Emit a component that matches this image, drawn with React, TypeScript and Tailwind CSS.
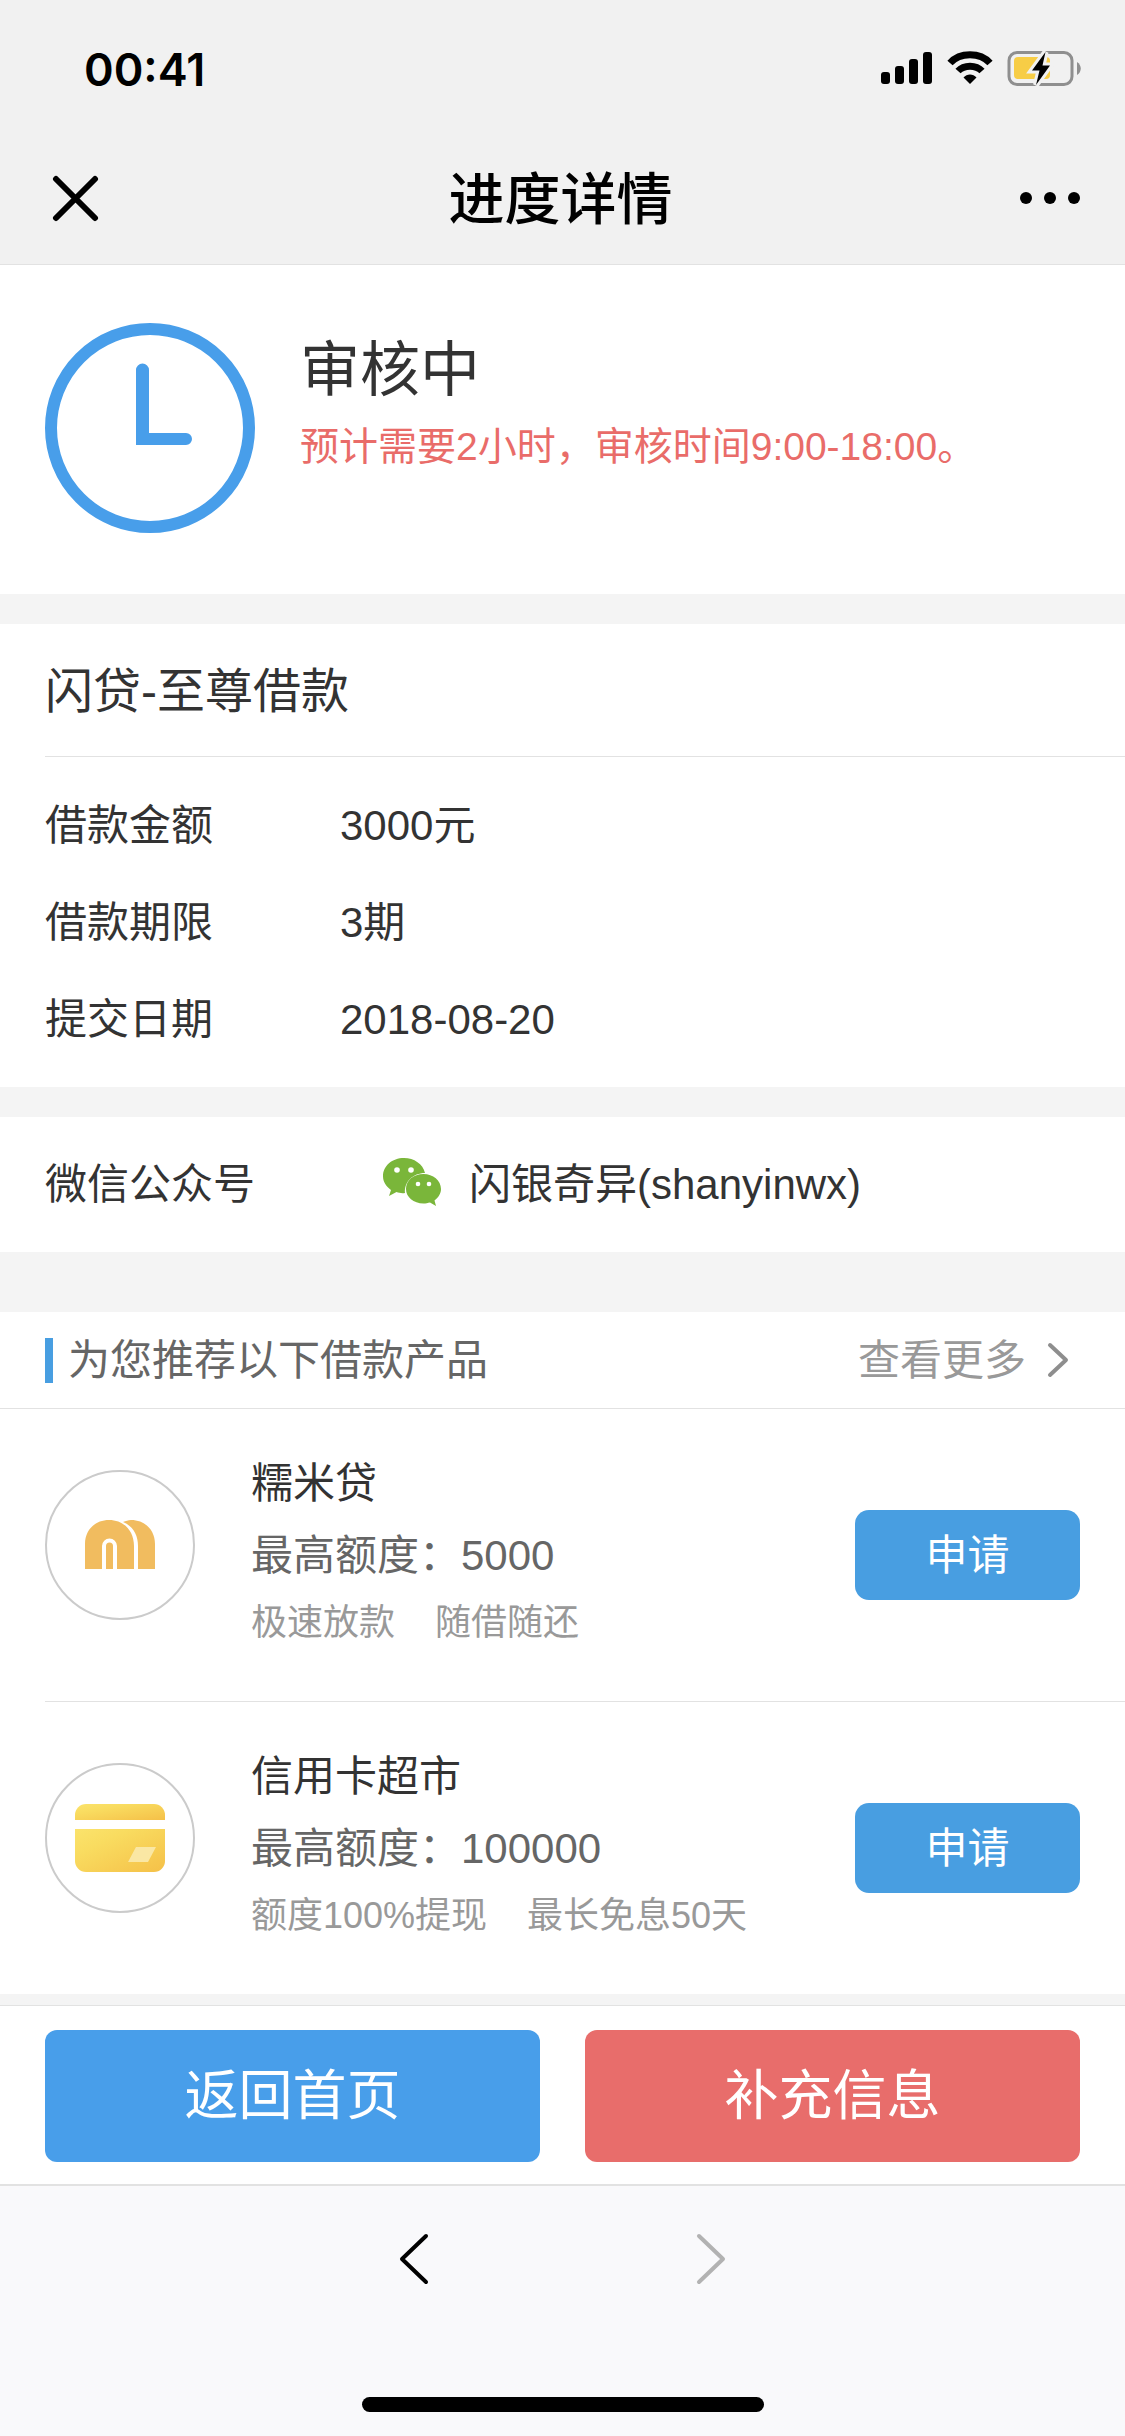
import type { ReactNode } from "react";

interface Product {
    name: string;
    quota: string;
    tags: string[];
    logo: ReactNode;
}

const details = [
    { label: "借款金额", value: "3000元" },
    { label: "借款期限", value: "3期" },
    { label: "提交日期", value: "2018-08-20" },
];

const products: Product[] = [
    { name: "糯米贷", quota: "5000", tags: ["极速放款", "随借随还"], logo: <NuomiLogo /> },
    { name: "信用卡超市", quota: "100000", tags: ["额度100%提现", "最长免息50天"], logo: <CardLogo /> },
];

function NuomiLogo() {
    return (
        <svg width="70" height="50" viewBox="0 0 70 50" aria-hidden="true">
            <path d="M38 2 C41 1 43 0 46 0 C60 0 70 10 70 24 V49 H53 V26 C53 15 48 6 38 2 Z" fill="#f1bc5f" />
            <path d="M0 49 V24 C0 10 10 0 24 0 C39 0 49 11 49 26 V49 H32 V26 A7.500 7.500 0 0 0 17 26 V49 Z" fill="#f1bc5f" />
            <path d="M21 49 V26 A3.500 3.500 0 0 1 28 26 V49 Z" fill="#f1bc5f" />
        </svg>
    );
}

function CardLogo() {
    return (
        <svg width="90" height="68" viewBox="0 0 90 68" aria-hidden="true">
            <defs>
                <linearGradient id="card" x1="0" y1="0" x2="1" y2="1">
                    <stop offset="0" stopColor="#fbe36c" />
                    <stop offset="0.300" stopColor="#f9dc60" />
                    <stop offset="1" stopColor="#f5c048" />
                </linearGradient>
            </defs>
            <path d="M0 16 V11 A11 11 0 0 1 11 0 H79 A11 11 0 0 1 90 11 V16 Z" fill="url(#card)" />
            <path d="M0 25 H90 V57 A11 11 0 0 1 79 68 H11 A11 11 0 0 1 0 57 Z" fill="url(#card)" />
            <path d="M61 43 H81 L73 58 H53 Z" fill="#fae7a4" />
        </svg>
    );
}

function StatusBar() {
    return (
        <div className="flex h-[136px] items-center justify-between pt-0.5 pr-11 pl-[84px]">
            <time className="font-['Inter'] text-[45px] leading-none font-semibold">00:41</time>
            <svg width="201" height="36" viewBox="0 0 201 36" role="img" aria-label="信号、无线网络、电池充电中">
                <rect x="1" y="21" width="9" height="12" rx="3" />
                <rect x="15" y="15" width="9" height="18" rx="3" />
                <rect x="29" y="8" width="9" height="25" rx="3" />
                <rect x="43" y="1" width="9" height="32" rx="3" />
                <g fill="none" stroke="#000" strokeWidth="7">
                    <path d="M70 12 C80 1 100 1 110 12" />
                    <path d="M78 20 C84 13.500 96 13.500 102 20" />
                </g>
                <path d="M90 33 L83.500 26.500 C87 22.500 93 22.500 96.500 26.500 Z" />
                <rect x="129" y="1.500" width="63" height="32" rx="8" fill="none" stroke="#8f8f8f" strokeWidth="3" />
                <path d="M197 11 C202 14 202 21 197 24 Z" fill="#8f8f8f" />
                <rect x="134" y="6" width="36" height="22" rx="4" fill="#f7cd46" />
                <path d="M165.500 1 L152 19.500 H159.500 L156 34 L170 14.500 H162.500 Z" fill="#000" stroke="#f1f1f1" strokeWidth="6" paintOrder="stroke" />
            </svg>
        </div>
    );
}

function NavBar() {
    return (
        <div className="flex h-32 items-center justify-between px-11 pb-1">
            <button type="button" aria-label="关闭" className="flex w-20 pl-2">
                <svg width="48" height="48" viewBox="0 0 48 48" stroke="#000" strokeWidth="6" strokeLinecap="round">
                    <path d="M4 5 L43 44 M43 5 L4 44" />
                </svg>
            </button>
            <h1 className="pt-1 text-[56px] leading-none font-medium">进度详情</h1>
            <button type="button" aria-label="更多" className="flex w-[84px] justify-end">
                <svg width="62" height="14" viewBox="0 0 62 14">
                    <circle cx="7" cy="7" r="6" />
                    <circle cx="31" cy="7" r="6" />
                    <circle cx="55" cy="7" r="6" />
                </svg>
            </button>
        </div>
    );
}

function ReviewStatus() {
    return (
        <section className="flex gap-[45px] bg-white px-[45px] pt-[58px] pb-[61px]">
            <svg width="210" height="210" viewBox="0 0 210 210" className="shrink-0" aria-hidden="true">
                <circle cx="105" cy="105" r="99" fill="none" stroke="#489eea" strokeWidth="12" />
                <path d="M91 122 V47 A6 6 0 0 1 104 47 V110 H141 A6 6 0 0 1 141 122 Z" fill="#489eea" />
            </svg>
            <div className="pt-2.5">
                <h2 className="text-[60px] leading-[76px]">审核中</h2>
                <p className="text-[39px] leading-[76px] text-[#e96c69]">预计需要2小时，审核时间9:00-18:00。</p>
            </div>
        </section>
    );
}

function LoanDetails() {
    return (
        <section className="bg-white pl-[45px]">
            <h2 className="border-b border-[#e2e2e2] pt-8 pb-7 text-5xl leading-[72px]">闪贷-至尊借款</h2>
            <dl className="pt-5 pb-[19px]">
                {details.map((row) => (
                    <div key={row.label} className="flex text-[42px] leading-[97px]">
                        <dt className="w-[295px]">{row.label}</dt>
                        <dd>{row.value}</dd>
                    </div>
                ))}
            </dl>
        </section>
    );
}

function OfficialAccount() {
    return (
        <section className="flex h-[135px] items-center bg-white px-[45px] text-[42px]">
            <span className="w-[338px]">微信公众号</span>
            <svg width="58" height="48" viewBox="0 0 58 48" className="mr-7 mb-1.5" aria-hidden="true">
                <path d="M21 0 C9 0 0 8 0 18 C0 24 3 28 8 32 L6 38 L13.500 34 C16 35 19 35.500 22 35 C21 24 30 15 42 15 C40 6 31 0 21 0 Z" fill="#7ab63a" />
                <path d="M40.500 16 C30.500 16 23 22.500 23 31 C23 39 30.500 45.500 40.500 45.500 C42.500 45.500 45 45 47 44.500 L53 48 L51.500 42.500 C55.500 39.500 58 35.500 58 31 C58 22.500 50 16 40.500 16 Z" fill="#7ab63a" />
                <g fill="#fff">
                    <circle cx="14" cy="12" r="2.800" />
                    <circle cx="28" cy="12" r="2.800" />
                    <circle cx="35" cy="26" r="2.300" />
                    <circle cx="46" cy="26" r="2.300" />
                </g>
            </svg>
            <span>闪银奇异(shanyinwx)</span>
        </section>
    );
}

function ProductRow({ name, quota, tags, logo }: Product) {
    return (
        <li className="ml-[45px] flex items-center border-b border-[#e2e2e2] py-[37px] pr-[45px] last:border-b-0">
            <div className="-mt-5 flex size-[150px] shrink-0 items-center justify-center rounded-full border-2 border-[#cbcbcb]">{logo}</div>
            <div className="ml-14 flex-1 pt-0.5 text-[42px]">
                <h3 className="leading-[72px]">{name}</h3>
                <p className="leading-[72px] text-[#666]">最高额度：{quota}</p>
                <p className="flex gap-10 pb-2.5 text-4xl leading-[62px] text-[#999]">
                    {tags.map((tag) => (
                        <span key={tag}>{tag}</span>
                    ))}
                </p>
            </div>
            <button type="button" className="h-[90px] w-[225px] rounded-[14px] bg-[#489ee1] text-[42px] text-white">
                申请
            </button>
        </li>
    );
}

function Recommendations() {
    return (
        <section className="bg-white">
            <div className="flex h-[97px] items-center justify-between border-b border-[#e2e2e2] px-[45px] text-[42px]">
                <h2 className="flex items-center gap-[15px] text-[#666]">
                    <span className="h-[45px] w-2 bg-[#489ee1]" />
                    为您推荐以下借款产品
                </h2>
                <a href="#more" className="flex items-center gap-5 pr-2.5 text-[#999]">
                    查看更多
                    <svg width="24" height="36" viewBox="0 0 24 36" fill="none" stroke="#8e8e8e" strokeWidth="4" strokeLinecap="round" strokeLinejoin="round" aria-hidden="true">
                        <path d="M4 3 L20 18 L4 33" />
                    </svg>
                </a>
            </div>
            <ul>
                {products.map((product) => (
                    <ProductRow key={product.name} {...product} />
                ))}
            </ul>
        </section>
    );
}

function ActionBar() {
    return (
        <div className="flex gap-[45px] border-t border-[#e2e2e2] bg-white px-[45px] pt-6 pb-[22px] text-[54px] text-white">
            <button type="button" className="h-[132px] flex-1 rounded-xl bg-[#489eea]">
                返回首页
            </button>
            <button type="button" className="h-[132px] flex-1 rounded-xl bg-[#e86d6b]">
                补充信息
            </button>
        </div>
    );
}

function BrowserBar() {
    return (
        <footer className="flex flex-1 flex-col items-center justify-between border-t-2 border-[#e2e2e2] bg-[#f9f9fb] pt-[46px] pb-6">
            <nav className="flex w-[329px] justify-between">
                <button type="button" aria-label="后退">
                    <svg width="32" height="54" viewBox="0 0 32 54" fill="none" stroke="#000" strokeWidth="4" strokeLinecap="round" strokeLinejoin="round">
                        <path d="M28 4 L4 27 L28 50" />
                    </svg>
                </button>
                <button type="button" aria-label="前进" disabled>
                    <svg width="32" height="54" viewBox="0 0 32 54" fill="none" stroke="#b2b2b2" strokeWidth="4" strokeLinecap="round" strokeLinejoin="round">
                        <path d="M4 4 L28 27 L4 50" />
                    </svg>
                </button>
            </nav>
            <div className="h-[15px] w-[402px] rounded-full bg-black" />
        </footer>
    );
}

export default function App() {
    return (
        <div className="flex min-h-screen flex-col bg-[#f4f4f4] font-['Liberation_Sans','Noto_Sans_CJK_SC',sans-serif] text-[#333]">
            <header className="border-b border-[#e2e2e2] bg-[#f1f1f1] text-black">
                <StatusBar />
                <NavBar />
            </header>
            <main>
                <ReviewStatus />
                <div className="mt-[30px]">
                    <LoanDetails />
                </div>
                <div className="mt-[30px]">
                    <OfficialAccount />
                </div>
                <div className="mt-[60px] mb-[11px]">
                    <Recommendations />
                </div>
                <ActionBar />
            </main>
            <BrowserBar />
        </div>
    );
}
